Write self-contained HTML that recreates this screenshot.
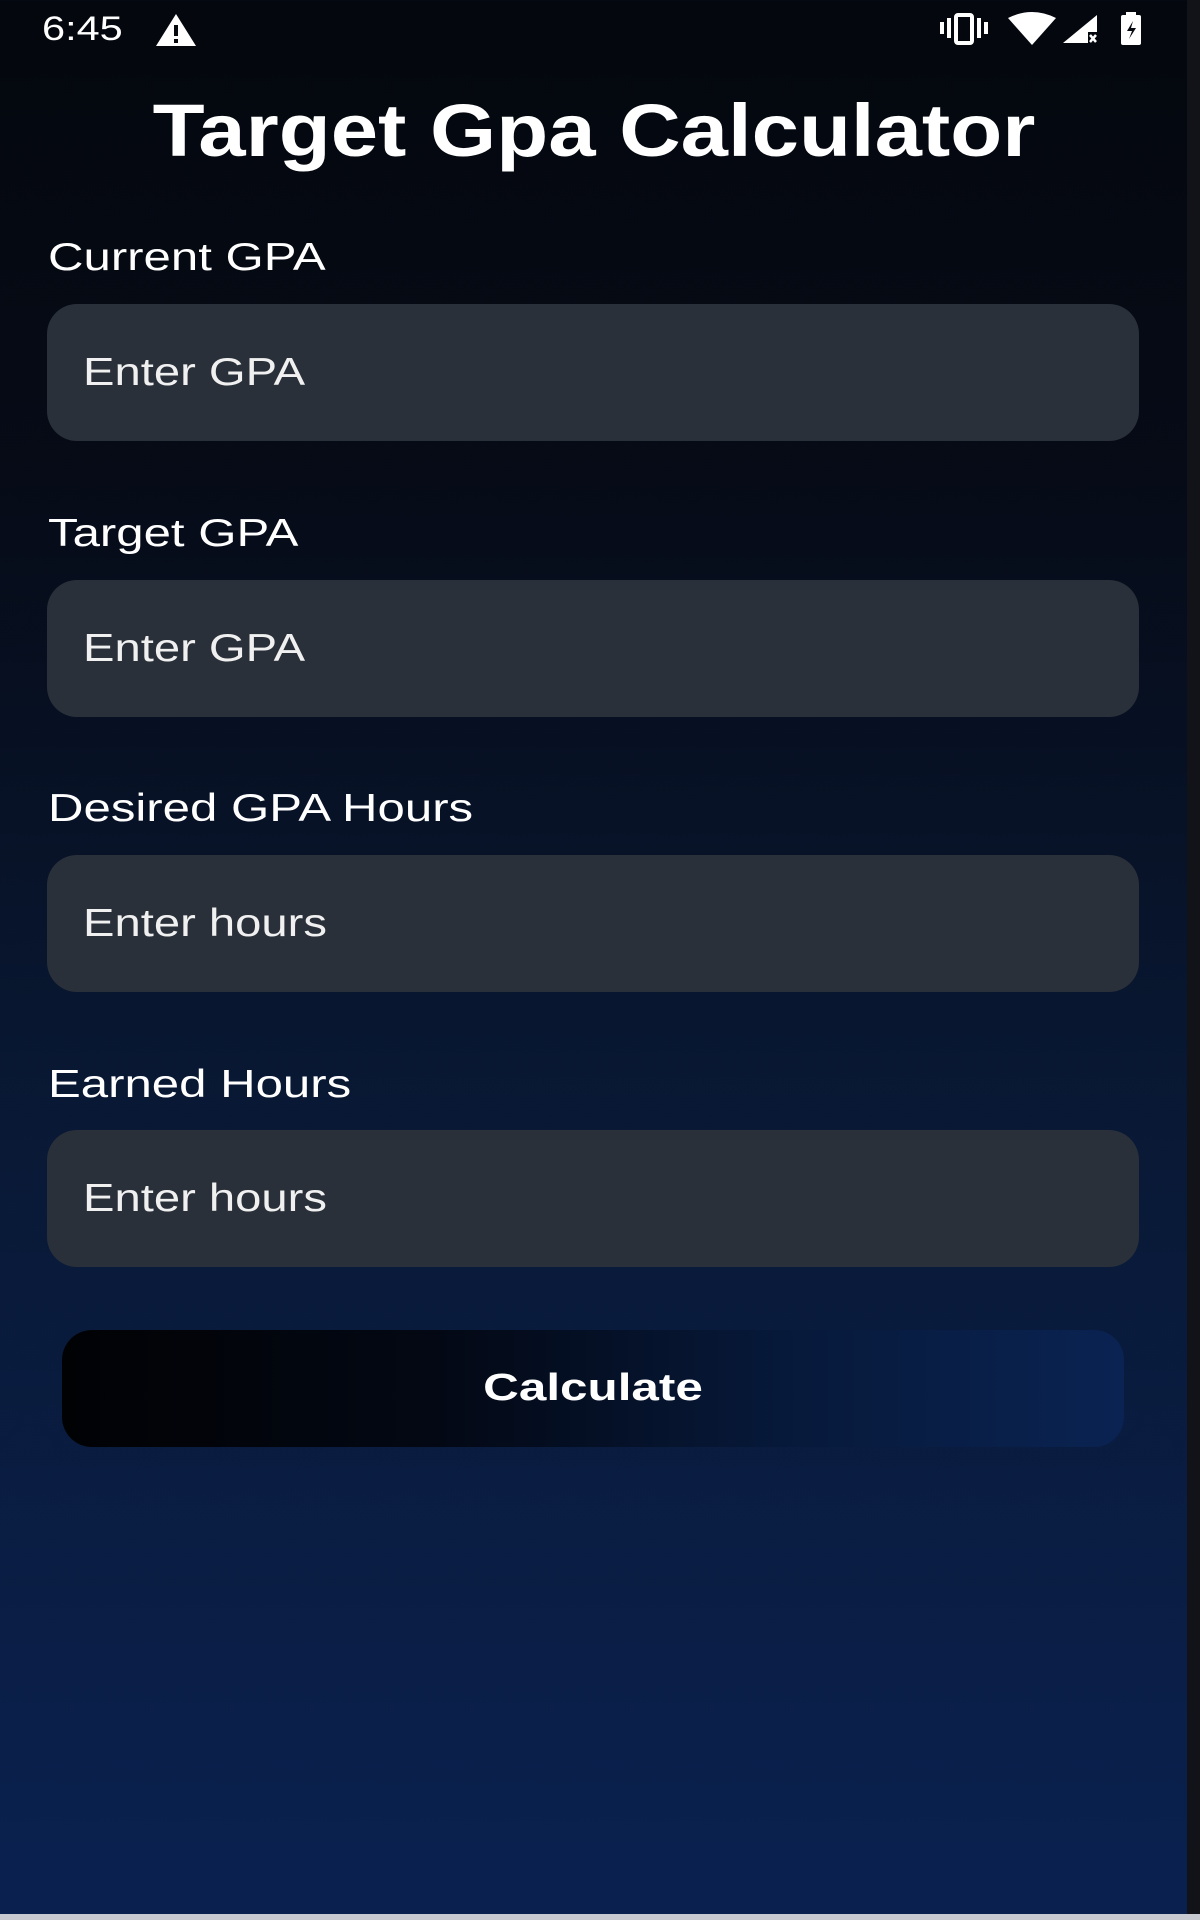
<!DOCTYPE html>
<html><head><meta charset="utf-8"><style>
*{margin:0;padding:0;box-sizing:border-box}
html,body{width:1200px;height:1920px;overflow:hidden}
body{position:relative;font-family:"Liberation Sans",sans-serif;color:#fff;
background:linear-gradient(180deg,#04070d 0%,#060b17 25%,#091936 60%,#0a2150 100%)}
.strip{position:absolute;right:0;top:0;width:13px;height:1920px;background:#121219}
.bot{position:absolute;left:0;bottom:0;width:1200px;height:6px;background:#c8cad2}
.time{position:absolute;left:42px;top:10px;font-size:34px;transform:scaleX(1.22);transform-origin:left}
.title{position:absolute;left:0;width:1188px;top:88px;text-align:center;font-size:74px;font-weight:bold;transform:scaleX(1.15)}
.lbl{position:absolute;left:48px;font-size:39px;transform:scaleX(1.26);transform-origin:left}
.inp{position:absolute;left:47px;width:1092px;height:137px;border-radius:30px;background:#2a3039}
.inp span{position:absolute;left:36px;top:47px;font-size:39px;color:#f0f0f0;transform:scaleX(1.21);transform-origin:left}
.btn{position:absolute;left:62px;top:1330px;width:1062px;height:117px;border-radius:30px;
background:linear-gradient(90deg,#010204 0%,#030814 35%,#071a3c 70%,#0a2352 100%)}
.btn span{position:absolute;left:0;width:1062px;text-align:center;line-height:117px;font-size:38px;font-weight:bold;transform:scaleX(1.3)}
</style></head><body>
<div class="strip"></div>
<div class="time">6:45</div>
<svg style="position:absolute;left:155px;top:13px" width="42" height="34" viewBox="0 0 42 34"><path d="M21 1 L41 33 L1 33 Z" fill="#fff"/><rect x="19" y="12" width="4" height="11" fill="#05080f"/><rect x="19" y="26" width="4" height="4" fill="#05080f"/></svg>
<svg style="position:absolute;left:938px;top:12px" width="210" height="34" viewBox="0 0 210 34">
<rect x="2" y="10" width="4" height="12" fill="#fff"/><rect x="9" y="6" width="4" height="20" fill="#fff"/>
<rect x="18" y="3" width="16" height="28" rx="2" fill="none" stroke="#fff" stroke-width="4"/>
<rect x="39" y="6" width="4" height="20" fill="#fff"/><rect x="46" y="10" width="4" height="12" fill="#fff"/>
<path d="M70 6 Q94 -6 118 6 L94 33 Z" fill="#fff"/>
<path d="M125 31 L159 3 L159 20 L150 20 L150 31 Z" fill="#fff"/>
<path d="M152 23 L158 30 M158 23 L152 30" stroke="#fff" stroke-width="2.5"/>
<rect x="183" y="3" width="20" height="30" rx="2" fill="#fff"/><rect x="188" y="0" width="10" height="4" fill="#fff"/>
<path d="M195 9 L189 19 L194 19 L191 27 L198 16 L193 16 Z" fill="#05080f"/>
</svg>
<div class="title">Target Gpa Calculator</div>
<div class="lbl" style="top:236px">Current GPA</div>
<div class="inp" style="top:304px"><span>Enter GPA</span></div>
<div class="lbl" style="top:512px">Target GPA</div>
<div class="inp" style="top:580px"><span>Enter GPA</span></div>
<div class="lbl" style="top:787px">Desired GPA Hours</div>
<div class="inp" style="top:855px"><span>Enter hours</span></div>
<div class="lbl" style="top:1063px">Earned Hours</div>
<div class="inp" style="top:1130px"><span>Enter hours</span></div>
<div class="btn"><span>Calculate</span></div>
<div class="bot"></div>
</body></html>
